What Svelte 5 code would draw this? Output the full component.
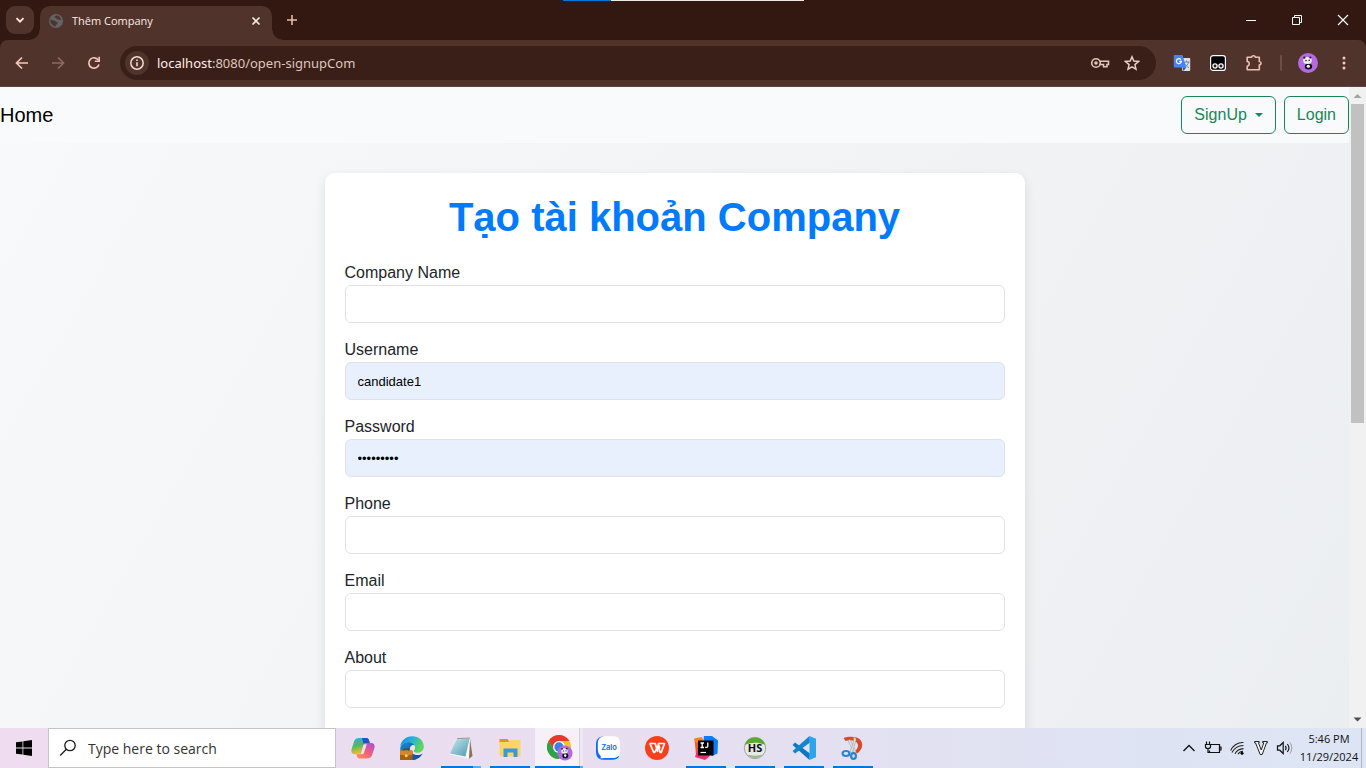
<script>
  const fields = [
    { id: 'companyName', label: 'Company Name', type: 'text', value: '', filled: false },
    { id: 'username', label: 'Username', type: 'text', value: 'candidate1', filled: true },
    { id: 'password', label: 'Password', type: 'password', value: '123456789', filled: true },
    { id: 'phone', label: 'Phone', type: 'text', value: '', filled: false },
    { id: 'email', label: 'Email', type: 'email', value: '', filled: false },
    { id: 'about', label: 'About', type: 'text', value: '', filled: false }
  ];
</script>

<div class="desktop">
  <div class="progress"><span></span></div>

  <header class="tabstrip">
    <button class="tabsearch" type="button">
      <svg width="16" height="16" viewBox="0 0 16 16"><path d="M4.500 6.200 8 9.700l3.500-3.500" fill="none" stroke="#ffe9e2" stroke-width="1.800" /></svg>
    </button>
    <div class="tab">
      <svg width="16" height="16" viewBox="0 0 16 16">
        <circle cx="8" cy="8" r="7" fill="#5f6468" />
        <path d="M2.300 6.500c1.500-.2 2.200.8 3.500.9 1.500.1 1.700 1.200 3 1.500 1.200.3.900 1.700-.1 2.300-.7.500-.9 1.300-.9 2.300-1.300-.1-2.500-.6-3.400-1.500C2.900 10.700 2 8.500 2.300 6.500zM8.200 2.400c-.9.700-1.900 1-1.600 1.900.3.800 1.500.4 1.800 1.300.3.800 1.300 1.100 2.200.9.900-.2 1.500.6 2.700.5-.3-2.300-2.200-4.700-5.100-4.600z" fill="#50342c" />
      </svg>
      <span class="title">Thêm Company</span>
      <button type="button" class="plain">
        <svg width="16" height="16" viewBox="0 0 16 16"><path d="M4.500 4.500l7 7M11.500 4.500l-7 7" stroke="#ffe9e2" stroke-width="1.600" /></svg>
      </button>
    </div>
    <button type="button" class="plain newtab">
      <svg width="16" height="16" viewBox="0 0 16 16"><path d="M8 3v10M3 8h10" stroke="#ecb9ab" stroke-width="1.600" /></svg>
    </button>
    <div class="winctl">
      <button type="button"><svg width="12" height="12" viewBox="0 0 12 12"><path d="M1 6.500h10" stroke="#fff" /></svg></button>
      <button type="button"><svg width="12" height="12" viewBox="0 0 12 12"><path d="M1.500 3.500h7v7h-7zM3.500 3.500v-2h7v7h-2" fill="none" stroke="#fff" /></svg></button>
      <button type="button"><svg width="12" height="12" viewBox="0 0 12 12"><path d="M1 1l10 10M11 1L1 11" stroke="#fff" stroke-width="1.200" /></svg></button>
    </div>
  </header>

  <div class="toolbarwrap">
    <div class="toolbar">
      <div class="group">
        <button type="button"><svg width="16" height="16" viewBox="0 0 16 16"><path d="M14 8H3M8 2.500 2.500 8 8 13.500" fill="none" stroke="#f5c6b9" stroke-width="1.700" /></svg></button>
        <button type="button"><svg width="16" height="16" viewBox="0 0 16 16"><path d="M2 8h11M8 2.500 13.500 8 8 13.500" fill="none" stroke="#8d6a61" stroke-width="1.700" /></svg></button>
        <button type="button"><svg width="16" height="16" viewBox="0 0 16 16"><path d="M13 9.500A5.200 5.200 0 1 1 12.300 5" fill="none" stroke="#f5c6b9" stroke-width="1.700" /><path d="M14 1.800v5.200H8.800V5.400h3.600V1.800z" fill="#f5c6b9" /></svg></button>
      </div>
      <div class="address">
        <span class="info">
          <svg width="16" height="16" viewBox="0 0 16 16"><circle cx="8" cy="8" r="6.200" fill="none" stroke="#f3d9d1" stroke-width="1.500" /><path d="M8 7.200v4M8 4.500v1.600" stroke="#f3d9d1" stroke-width="1.600" /></svg>
        </span>
        <span class="url"><b>localhost</b>:8080/open-signupCom</span>
        <button type="button">
          <svg width="20" height="16" viewBox="0 0 20 16"><circle cx="6" cy="8" r="4.300" fill="none" stroke="#e2c4bb" stroke-width="1.600" /><circle cx="6" cy="8" r="1.800" fill="#e2c4bb" /><path d="M9.500 6.200h9v3.300H17v2.300h-3.500V9.500h-4" fill="none" stroke="#e2c4bb" stroke-width="1.600" /></svg>
        </button>
        <button type="button">
          <svg width="16" height="16" viewBox="0 0 16 16"><path d="M8 1.800l1.800 4.300 4.700.4-3.600 3.100 1.100 4.600L8 11.800l-4 2.400 1.100-4.600L1.500 6.500l4.700-.4z" fill="none" stroke="#e8cdc4" stroke-width="1.500" /></svg>
        </button>
      </div>
      <div class="group">
        <button type="button">
          <svg width="18" height="18" viewBox="0 0 18 18">
            <path d="M7 4h9.500a.7.700 0 0 1 .7.700v11.600a.7.700 0 0 1-.7.700H9.500z" fill="#dde1e6" />
            <path d="M10.500 8h6M13.500 6.500V8M15.500 8c-.5 2.500-2 4.300-4 5.500M11.800 9.500c.8 1.800 2.200 3.300 4 4.200" stroke="#6f8790" fill="none" />
            <path d="M1.500 1h8l3.700 12.500H1.700a.9.900 0 0 1-.9-.9V1.800a.8.800 0 0 1 .7-.8z" fill="#4286f5" />
            <path d="M9.500 13.500h3.700L10.500 17z" fill="#1a56c9" />
            <path d="M7.900 5.600A2.500 2.500 0 1 0 8.400 7.400H6.200" fill="none" stroke="#fff" stroke-width="1.200" />
          </svg>
        </button>
        <button type="button">
          <svg width="18" height="18" viewBox="0 0 18 18">
            <rect x="1.600" y="1.600" width="14.800" height="14.800" rx="2.500" fill="#000" stroke="#fff" stroke-width="1.200" />
            <circle cx="6" cy="12" r="2.100" fill="#3a1a12" stroke="#fff" stroke-width="1.300" /><circle cx="12" cy="12" r="2.100" fill="#3a1a12" stroke="#fff" stroke-width="1.300" />
          </svg>
        </button>
        <button type="button">
          <svg width="18" height="18" viewBox="0 0 18 18"><path d="M2.200 3.200h4.300c.6-2 3.400-2 4 0h3.800v4.300c2.400.5 2.400 3 0 3.500v4.800H2.200v-3.600c2.800-.6 2.800-4.200 0-4.800z" fill="none" stroke="#f0bfb2" stroke-width="1.600" stroke-linejoin="round" /></svg>
        </button>
        <span class="divider"></span>
        <button type="button">
          <svg width="20" height="20" viewBox="0 0 20 20">
            <circle cx="10" cy="10" r="10" fill="#b36ae2" />
            <ellipse cx="10.500" cy="13.500" rx="3.700" ry="3" fill="#151318" /><ellipse cx="10.300" cy="13.300" rx="1.600" ry="1.500" fill="#f4f4f4" />
            <ellipse cx="9.500" cy="7.400" rx="4.300" ry="3.500" fill="#f0eef2" />
            <circle cx="6.300" cy="4.700" r="1.100" fill="#222" /><circle cx="12.300" cy="4.500" r="1.100" fill="#222" />
            <circle cx="8" cy="7.600" r=".8" fill="#222" /><circle cx="11.200" cy="7.200" r=".8" fill="#222" />
          </svg>
        </button>
        <button type="button">
          <svg width="16" height="16" viewBox="0 0 16 16" fill="#f5c6b9"><circle cx="8" cy="3" r="1.500" /><circle cx="8" cy="8" r="1.500" /><circle cx="8" cy="13" r="1.500" /></svg>
        </button>
      </div>
    </div>
  </div>

  <div class="viewport">
    <main class="site">
      <nav>
        <a href="#home">Home</a>
        <div class="actions">
          <button type="button" class="btn">SignUp <span class="caret"></span></button>
          <button type="button" class="btn">Login</button>
        </div>
      </nav>
      <form class="card" autocomplete="off">
        <h1>Tạo tài khoản Company</h1>
        {#each fields as f (f.id)}
          <div class="field">
            <label for={f.id}>{f.label}</label>
            <input id={f.id} type={f.type} value={f.value} class:filled={f.filled} />
          </div>
        {/each}
      </form>
    </main>
    <div class="scrollbar">
      <svg width="17" height="17" viewBox="0 0 17 17"><path d="M4.500 11 8.500 7l4 4z" fill="#a3a3a3" /></svg>
      <div class="track"><div class="thumb"></div></div>
      <svg width="17" height="17" viewBox="0 0 17 17"><path d="M4.500 6.500l4 4 4-4z" fill="#505050" /></svg>
    </div>
  </div>

  <footer class="taskbar">
    <button type="button" class="start">
      <svg width="16" height="16" viewBox="0 0 16 16"><path d="M0 2.300 6.500 1.400V7.600H0zM7.300 1.300 16 0v7.600H7.300zM0 8.400h6.500v6.200L0 13.700zM7.300 8.400H16V16l-8.700-1.300z" /></svg>
    </button>
    <label class="search">
      <svg width="18" height="18" viewBox="0 0 18 18"><circle cx="11" cy="6.500" r="5.200" fill="none" stroke="#1a1a1a" stroke-width="1.300" /><path d="M7.300 10.300 1.200 16.500" stroke="#1a1a1a" stroke-width="1.300" /></svg>
      <input type="text" placeholder="Type here to search" aria-label="Type here to search" />
    </label>
    <div class="apps">
      <button type="button">
        <svg width="24" height="24" viewBox="0 0 24 24">
          <defs>
            <linearGradient id="cp1" x1="0" y1="0" x2="0.300" y2="1"><stop offset="0" stop-color="#1fb5e8" /><stop offset=".5" stop-color="#4fb76a" /><stop offset="1" stop-color="#f6c21c" /></linearGradient>
            <linearGradient id="cp2" x1="1" y1="0" x2="0.200" y2="1"><stop offset="0" stop-color="#a04fe0" /><stop offset=".5" stop-color="#ee5a86" /><stop offset="1" stop-color="#fb8f45" /></linearGradient>
          </defs>
          <path d="M8.500 2h7c1.300 0 2 .8 2.400 2l.9 3h-3.500c-1.600 0-2.500.8-3 2.300L10.300 16c-.5 1.500-1.400 2.300-2.900 2.300H3.800C1 18.300-.2 16 .6 13.200L3 5.500C3.800 3 5.500 2 8.500 2z" fill="url(#cp1)" />
          <path d="M11 2h4.500c1.300 0 2 .8 2.400 2l.9 3h-3.500c-1.200 0-2 .5-2.500 1.300z" fill="#1f52cf" />
          <path d="M15.500 22.500h-7c-1.300 0-2-.8-2.400-2l-.7-2.200h2c1.500 0 2.400-.8 2.900-2.300L12.400 9.300C12.900 7.800 13.800 7 15.300 7h4.900c2.800 0 4 2.300 3.200 5L21 19.200c-.8 2.400-2.500 3.300-5.500 3.300z" fill="url(#cp2)" />
          <path d="M12.200 9.800c.3-.9.800-1.400 1.500-1.600h2.100l-2.800 8.500c-.3.900-.8 1.400-1.600 1.600H9.300c.5-.5.800-1.200 1-2z" fill="#eee1f2" />
        </svg>
      </button>
      <button type="button">
        <svg width="24" height="24" viewBox="0 0 24 24">
          <defs>
            <linearGradient id="ed" x1="0" y1="0" x2="1" y2="0.400"><stop offset="0" stop-color="#1583d8" /><stop offset=".45" stop-color="#22aee0" /><stop offset="1" stop-color="#5fd858" /></linearGradient>
            <linearGradient id="ed2" x1="0" y1="0" x2="1" y2="1"><stop offset="0" stop-color="#1c86d8" /><stop offset="1" stop-color="#0e4a96" /></linearGradient>
          </defs>
          <path d="M.2 12C1.500 7.500 5.500 6 9 6c3 0 5 1.500 5.500 3.500-2.500-.7-4.500 1-4.500 3.500 0 3.500 3.500 6 7.500 6 2 0 3.700-.6 5.200-1.600C20.500 21.500 16.500 24 12 24 5 24 .2 18.500.2 12z" fill="url(#ed2)" />
          <path d="M.2 11C.8 4.500 6 .2 12.200.2 19 .2 23.800 5 23.800 10.500c0 4-3 6.300-6.300 6.300-2.300 0-3.700-.8-3.700-1.800 0-.9 1.300-1.400 1.300-3.400C15.100 8.600 12.200 6.300 9 6.300 5 6.300 1.500 8.500.2 11z" fill="url(#ed)" />
          <path d="M10.200 12.800c0-2 1.300-3.600 3.200-3.700 1 .9 1.500 1.700 1.500 2.700 0 1.800-1.300 2.400-1.300 3.300 0 1.400 2.300 2.200 4.500 2.100-1 .5-2 .7-3 .4-2.600-.5-4.900-2.300-4.900-4.800z" fill="#eee1f2" />
          <rect x="0" y="14.500" width="12.500" height="9.500" rx=".6" fill="#a65f17" /><path d="M0 14.500h12.500v4L6.200 20 0 18.500z" fill="#d4862a" /><path d="M4 14.500V13h4.500v1.500" fill="none" stroke="#6b3c0b" /><rect x="5" y="18.500" width="2.500" height="2.500" fill="#ffd34d" />
        </svg>
      </button>
      <button type="button" class="open multi">
        <svg width="24" height="24" viewBox="0 0 24 24">
          <defs><linearGradient id="np" x1="0" y1="0" x2="1" y2="1"><stop offset="0" stop-color="#c8e8ee" /><stop offset="1" stop-color="#4c9aae" /></linearGradient></defs>
          <path d="M21 2.500 23.500 20l-3.500 2.700z" fill="#8d7352" />
          <path d="M7.500 3 21 2.200 19.500 22.500 1 18.500z" fill="#f7f8f4" />
          <path d="M7.500 3.500 20.500 2.700 16.500 20.500 1 17.500z" fill="url(#np)" />
          <path d="M8 2.700 21 2" stroke="#8b9496" stroke-width="1" />
        </svg>
      </button>
      <button type="button" class="open">
        <svg width="24" height="24" viewBox="0 0 24 24">
          <path d="M1.500 3h8l1.500 2v2H1.500z" fill="#d99a1c" /><path d="M1.500 6h9l1.500-2h10.500v16.500h-21z" fill="#fbd667" />
          <path d="M5.500 12.500h14v8.500h-4v-4.500h-6V21h-4z" fill="#3b97dc" />
        </svg>
      </button>
      <button type="button" class="open current">
        <svg width="26" height="26" viewBox="0 0 26 26">
          <circle cx="12" cy="12" r="12" fill="#fcc31e" />
          <path d="M1.600 6A12 12 0 0 1 22.400 6H12L6.800 15z" fill="#e33b2e" />
          <path d="M1.600 6A12 12 0 0 0 12 24l5.200-9-10.400 0z" fill="#2ba24c" />
          <circle cx="12" cy="12" r="6" fill="#fff" /><circle cx="12" cy="12" r="4.700" fill="#3f7de8" />
          <circle cx="18" cy="18" r="7.600" fill="#b36ae2" />
          <ellipse cx="18.300" cy="20.700" rx="3" ry="2.600" fill="#151318" /><ellipse cx="18.200" cy="20.600" rx="1.200" ry="1.300" fill="#f4f4f4" />
          <ellipse cx="17.500" cy="15.900" rx="3.300" ry="2.600" fill="#f0eef2" /><circle cx="15" cy="13.800" r=".9" fill="#222" /><circle cx="19.800" cy="13.600" r=".9" fill="#222" /><circle cx="16.500" cy="16" r=".6" fill="#222" /><circle cx="19" cy="15.800" r=".6" fill="#222" />
        </svg>
      </button>
      <button type="button">
        <svg width="24" height="24" viewBox="0 0 24 24">
          <path d="M6.500.6C2.300 1 0 4 0 8.500V15c0 6 2.500 8.800 8 8.800h8c3.500 0 5.800-1 7-3L12 6z" fill="#0a68ff" />
          <path d="M9 .3h8c4.500 0 7 2.300 7 7V15c0 4.700-2.500 7-7 7H8.500c-1.500 0-2.500.5-4.200.2.800-1 .7-1.800 0-2.700C2.500 18 1.800 16 1.800 13V8C1.800 3.200 4 .3 9 .3z" fill="#fff" />
          <text x="13" y="14" text-anchor="middle" font-family="Inter, sans-serif" font-weight="600" font-size="7.500" fill="#0a68ff">Zalo</text>
        </svg>
      </button>
      <button type="button">
        <svg width="24" height="24" viewBox="0 0 24 24">
          <circle cx="12" cy="12" r="12" fill="#fb3f1c" />
          <path d="M4.500 7.500h5.700l2.600 8.500M4.800 7.500l4 9h.9l3.100-6.500 2.500 6.500h.9L19.500 7.500h-6.300M13 7.500l2 5" fill="none" stroke="#fff" stroke-width="1.700" stroke-linejoin="round" />
        </svg>
      </button>
      <button type="button" class="open">
        <svg width="24" height="24" viewBox="0 0 24 24">
          <path d="M0 2.500 8 1l3 8-8 10z" fill="#fc801d" /><path d="M1 6l6 3-1 10-4 1z" fill="#f0562c" /><path d="M10 0h8l6 4.500-.5 13L18 20 9 9z" fill="#087cfa" /><path d="M1 21 5 9l11 11-5 4z" fill="#f0306e" />
          <path d="M4 4.500h15.500v15H4z" fill="#000" />
          <path d="M6.500 7h3.500M8.200 7v4.500M6.500 11.500h3.500M13.800 6.500V10c0 1.500-1.500 1.700-2.500 1" fill="none" stroke="#fff" stroke-width="1.300" /><path d="M6.500 16.500h5.500" stroke="#fff" stroke-width="1.200" />
        </svg>
      </button>
      <button type="button" class="open">
        <svg width="24" height="24" viewBox="0 0 24 24">
          <circle cx="12" cy="12" r="10.700" fill="#e6eae4" stroke="#8f978c" stroke-width=".8" />
          <path d="M1.800 9A10.700 10.700 0 0 1 22.200 9C16 6 8 6 1.800 9z" fill="#55ad2c" />
          <path d="M4 18.500a10.700 10.700 0 0 0 16 0c-4 1.500-12 1.500-16 0z" fill="#9db396" />
          <text x="12" y="15.800" text-anchor="middle" font-family="'Open Sans', sans-serif" font-weight="700" font-size="11" fill="#111">HS</text>
        </svg>
      </button>
      <button type="button" class="open">
        <svg width="24" height="24" viewBox="0 0 24 24">
          <path d="M17.500 24 .6 9l2.400-2.500 15 11z" fill="#0f76c0" /><path d="M17.500 0 .6 15l2.400 2.500 15-11z" fill="#1583cf" />
          <path d="M17.500 0 24 2.700v18.600L17.500 24z" fill="#2aa5ee" />
        </svg>
      </button>
      <button type="button" class="open">
        <svg width="24" height="24" viewBox="0 0 24 24">
          <path d="M2.500 2C7 .2 15 0 18.500 3c4.300 4 3.500 10.500-2.500 14.500l-2-2.500c3.200-2.500 4-6 1.700-8.500C13.500 4.300 9 3.500 4.500 5z" fill="#d64a2a" />
          <path d="M9 3.500c-1 0-1.700 1-1.500 2L13 17l2-1.200z" fill="#dfe3e6" stroke="#8d9498" stroke-width=".5" /><path d="M13 1c1.500 0 2 1.500 2 3l-4 13.500-2.200-1L12 8z" fill="#dfe3e6" stroke="#8d9498" stroke-width=".5" />
          <ellipse cx="5" cy="17.500" rx="3.400" ry="2.500" fill="none" stroke="#2a86cc" stroke-width="2.200" /><ellipse cx="12.500" cy="20" rx="2.400" ry="2.900" fill="none" stroke="#2a86cc" stroke-width="2.200" />
        </svg>
      </button>
    </div>
    <div class="tray">
      <button type="button"><svg width="14" height="14" viewBox="0 0 14 14"><path d="M1.500 10 7 4.500l5.500 5.500" fill="none" stroke="#111" stroke-width="1.300" /></svg></button>
      <button type="button"><svg width="18" height="16" viewBox="0 0 18 16"><path d="M7 4.500h8.500v8H5.500v-2M15.500 7H17v3h-1.500M2.500 1.500v3M5.500 1.500v3M1.500 4.500h5v2c0 2-1 2-2.500 2s-2.500 0-2.500-2zM4 8.500v4h2" fill="none" stroke="#111" stroke-width="1.200" /></svg></button>
      <button type="button"><svg width="14" height="14" viewBox="0 0 14 14"><path d="M.7 9.500A13 13 0 0 1 13.500 1.500M2 11.500C4 7.500 8 4.700 13.500 4.500M5 12.800c1.500-3 4.500-5 8.500-5.200M8 13.300c.8-1.600 2.500-2.800 5-3" fill="none" stroke="#222" stroke-width="1.100" /><circle cx="12" cy="12.200" r="1.500" /></svg></button>
      <button type="button"><svg width="14" height="16" viewBox="0 0 14 16"><path d="M.6 1.500h4.600v1.300h-.7L7.200 10 9.800 2.800H8.600V1.500h4.800v1.300h-.9L8.200 14.500H6.200L1.500 2.800H.6z" fill="#f5f6fc" stroke="#222" stroke-width="1" /></svg></button>
      <button type="button"><svg width="18" height="16" viewBox="0 0 18 16"><path d="M1.500 5.800h2.300L7.200 2.500v11L3.800 10.200H1.500z" fill="none" stroke="#111" stroke-width="1.200" /><path d="M9.300 5.800c1 1.300 1 3.100 0 4.400M11.300 4c2 2.400 2 5.600 0 8" fill="none" stroke="#111" stroke-width="1.100" /><path d="M13.700 2.300c2.800 3.400 2.800 8 0 11.400" fill="none" stroke="#9a9da8" /></svg></button>
      <div class="clock"><time>5:46 PM</time><time>11/29/2024</time></div>
    </div>
  </footer>
</div>

<style>
  :global(body) { margin: 0; overflow: hidden; }
  .desktop, .desktop * { box-sizing: border-box; }
  .desktop {
    position: relative;
    height: 100vh;
    display: flex;
    flex-direction: column;
    font-family: 'Liberation Sans', Arial, sans-serif;
    background: #33180f;
  }
  svg { display: block; flex: none; }
  button { font: inherit; background: none; border: 0; padding: 0; margin: 0; color: inherit; display: flex; align-items: center; justify-content: center; flex: none; }

  .progress { position: absolute; top: 0; left: 0; right: 0; margin: 0 auto; width: 241px; height: 1px; background: #eee8e4; }
  .progress span { display: block; width: 20%; height: 1px; background: #0078d7; }

  .tabstrip { flex: none; height: 40px; display: flex; align-items: flex-end; padding-left: 6px; background: #321811; }
  .tabsearch { width: 28px; height: 28px; margin: 0 6px 6px 0; border-radius: 9px; background: #50342c; }
  .tab {
    position: relative;
    width: 232px; height: 34px;
    padding: 0 8px 5px;
    display: flex; align-items: center; gap: 8px;
    background: #50342c;
    border-radius: 10px 10px 0 0;
    color: #ffe9e2;
  }
  .tab::before, .tab::after { content: ''; position: absolute; bottom: 0; width: 10px; height: 10px; }
  .tab::before { right: 100%; background: radial-gradient(circle at 0 0, transparent 9px, #50342c 10px); }
  .tab::after { left: 100%; background: radial-gradient(circle at 100% 0, transparent 9px, #50342c 10px); }
  .title { flex: 1; white-space: nowrap; font: 11px/16px 'Open Sans', 'Noto Sans', sans-serif; }
  .newtab { width: 40px; height: 40px; }
  .winctl { margin-left: auto; display: flex; align-self: stretch; }
  .winctl button { width: 46px; height: 40px; }

  .toolbarwrap { flex: none; background: #321811; }
  .toolbar {
    height: 47px;
    display: flex; align-items: center; gap: 12px;
    padding: 0 8px;
    background: #50342c;
    border-bottom: 1px solid #5e453e;
    border-radius: 8px 8px 0 0;
  }
  .group { display: flex; align-items: center; gap: 8px; }
  .group button { width: 28px; height: 28px; }
  .divider { width: 10px; height: 16px; display: flex; justify-content: center; }
  .divider::before { content: ''; width: 2px; background: #6f4d44; border-radius: 1px; }
  .address {
    flex: 1; height: 34px;
    display: flex; align-items: center;
    padding: 0 8px 0 5px;
    border-radius: 17px;
    background: #3a1f18;
  }
  .address button { width: 32px; height: 28px; }
  .info { width: 24px; height: 24px; display: flex; align-items: center; justify-content: center; border-radius: 50%; background: #50342c; }
  .url { flex: 1; margin-left: 8px; color: #dfc5bd; font: 13px/20px 'Noto Sans', 'Open Sans', sans-serif; }
  .url b { font-weight: 400; color: #ffede7; }

  .viewport { flex: 1; min-height: 0; display: flex; overflow: hidden; }
  .site {
    flex: 1; min-width: 0; overflow: hidden;
    color: #212529;
    font-size: 16px; line-height: 24px;
    background: linear-gradient(120deg, #f8f9fa, #e9ecef) 0 0 / 100% 190% no-repeat;
  }
  nav { height: 56px; display: flex; align-items: center; justify-content: space-between; background: #f8fafc; }
  nav a { font-size: 20px; line-height: 30px; color: #000; text-decoration: none; }
  .actions { display: flex; gap: 8px; }
  .btn { height: 38px; padding: 0 12px; gap: 8px; border: 1px solid #198754; border-radius: 6px; color: #198754; }
  .caret { border: 4px solid transparent; border-top-color: #198754; border-bottom: 0; }
  .card {
    width: 100%; max-width: 700px;
    margin: 30px auto 0;
    padding: 20px 20px 60px;
    border-radius: 10px;
    background: #fff;
    box-shadow: 0 4px 12px rgba(0, 0, 0, 0.1);
  }
  h1 { margin: 0 0 20px; font-size: 40px; line-height: 48px; font-weight: 700; text-align: center; color: #007bff; }
  .field { margin-bottom: 15px; }
  .field label { display: block; }
  .field input {
    display: block; width: 100%; height: 38px;
    padding: 0 12px;
    border: 1px solid #dee2e6; border-radius: 6px;
    background: #fff; color: #000;
    font: 13px 'Liberation Sans', Arial, sans-serif;
    outline: 0;
  }
  .field input.filled { background: #e8f0fe; }

  .scrollbar { flex: none; width: 17px; display: flex; flex-direction: column; background: #f1f1f1; }
  .track { flex: 1; padding: 0 2px; }
  .thumb { height: 319px; background: #c1c1c1; }

  .taskbar { flex: none; height: 40px; display: flex; background: linear-gradient(90deg, #efdcf1, #e9def0 40%, #dfe3f3 80%, #dde5f4); }
  .start { width: 48px; }
  .search { width: 288px; height: 40px; display: flex; align-items: center; gap: 11px; padding: 0 10px; background: #fff; border: 1px solid #c6c4c8; }
  .search input { flex: 1; min-width: 0; border: 0; padding: 0; outline: 0; background: none; font: 14px 'Open Sans', 'Noto Sans', sans-serif; }
  .search input::placeholder { color: #333; opacity: 1; }
  .apps { display: flex; gap: 1px; margin-left: 3px; }
  .apps button { position: relative; width: 48px; height: 40px; }
  .open::after { content: ''; position: absolute; left: 4px; right: 4px; bottom: 0; height: 2px; background: #0078d7; }
  .multi::after { background: linear-gradient(90deg, #0078d7 80%, #66a9e0 80%); }
  .apps .current { padding-left: 2px; background: linear-gradient(90deg, #f6f1f9 44px, #d5cfdb 44px, #d5cfdb 45px, #efe8f3 45px); }
  .current::after { left: 0; right: 0; background: linear-gradient(90deg, #0078d7 45px, #66a9e0 45px); }
  .tray { margin-left: auto; display: flex; padding-right: 4px; }
  .tray button { width: 24px; height: 40px; }
  .clock { width: 65px; display: flex; flex-direction: column; justify-content: center; text-align: center; border-right: 1px solid #b0b5c4; color: #111; font: 11px/18px 'Open Sans', 'Noto Sans', sans-serif; white-space: nowrap; }
</style>
